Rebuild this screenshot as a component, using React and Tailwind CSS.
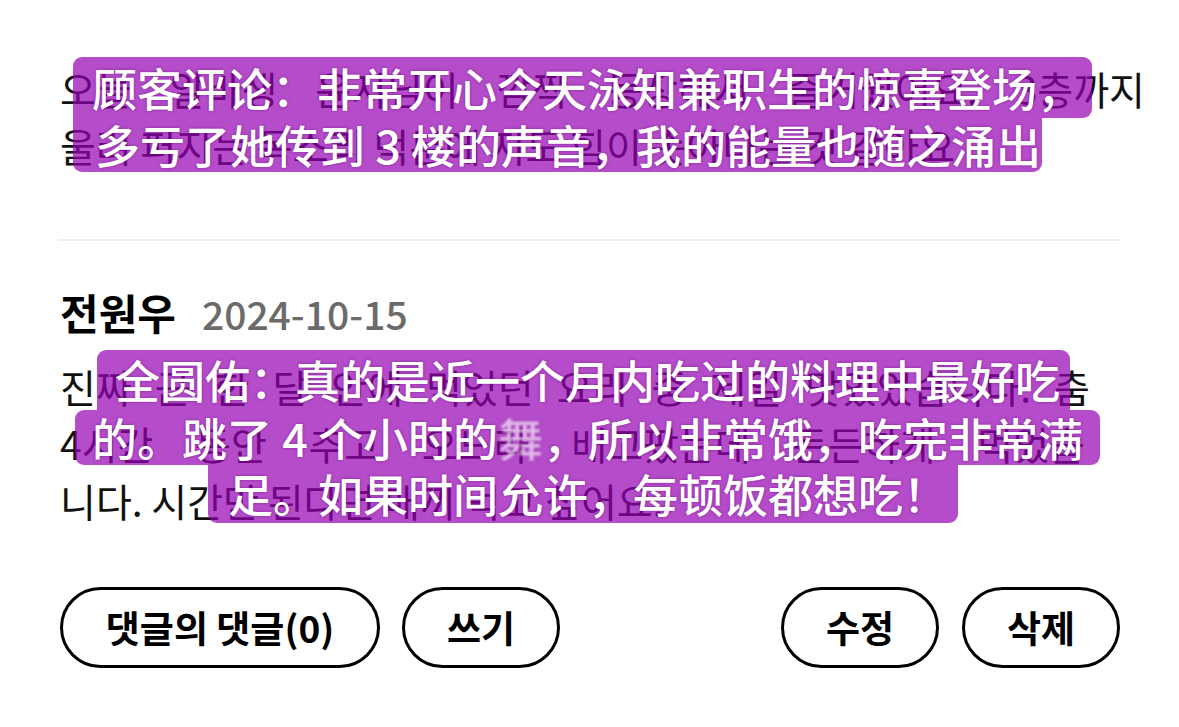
import React from 'react';

const box = 'bg-[rgba(150,0,180,0.7)] flex items-center whitespace-nowrap';
const zh = "font-['Noto_Sans_CJK_SC','Noto_Sans_CJK_KR',sans-serif] font-medium text-[45px] text-white [text-shadow:0_0_3px_rgba(90,0,110,0.55)]";
const fill = 'whitespace-nowrap text-justify [text-align-last:justify]';

function PillButton({ label, wide }) {
  return (
    <button
      className={`${wide ? 'w-[320px]' : 'w-[158px]'} h-[81px] rounded-full border-[3px] border-black flex items-center justify-center text-[37px] font-semibold text-black`}
    >
      {label}
    </button>
  );
}

export default function App() {
  return (
    <div className="relative w-[1179px] h-[727px] overflow-hidden bg-white pl-[60px] pr-[59px] pt-[60px] text-[#111] font-['Noto_Sans_CJK_KR',sans-serif]">
      {/* previous review text */}
      <div className="text-[39px] leading-[57px] whitespace-nowrap">
        <p className={`${fill} w-[1085px]`}>오늘 알바생 윤지님이 깜짝 등장해서 즐거웠어요. 3층까지</p>
        <p>울려 퍼지는 목소리 덕분에 저도 힘이 솟아나는 것 같아요</p>
      </div>

      <div className="mt-[65px] -ml-[2px] h-[2px] bg-[#efefef]" />

      {/* review header */}
      <div className="mt-[46px] flex items-baseline gap-[26px] leading-[50px]">
        <span className="text-[42px] font-semibold text-black">전원우</span>
        <span className="text-[39px] font-medium text-[#6b6b6b]">2024-10-15</span>
      </div>

      <div className="mt-[20px] text-[39px] leading-[57px] whitespace-nowrap">
        <p className={`${fill} w-[1030px]`}>진짜 근 한 달 안에 먹었던 요리 중 제일 맛있었습니다. 춤</p>
        <p className={`${fill} w-[1025px]`}>4시간 동안 추고 오느라 배고팠는데 든든하게 먹었습</p>
        <p>니다. 시간만 된다면 매끼 먹고 싶어요.</p>
      </div>

      {/* actions */}
      <div className="mt-[58px] flex justify-between">
        <div className="flex gap-[22px]">
          <PillButton label="댓글의 댓글(0)" wide />
          <PillButton label="쓰기" />
        </div>
        <div className="flex gap-[23px]">
          <PillButton label="수정" />
          <PillButton label="삭제" />
        </div>
      </div>

      {/* translation overlays */}
      <div className={`absolute left-[73px] top-[57px] flex flex-col items-start ${zh}`}>
        <div className={`${box} w-[1019px] h-[61px] pl-[19px] rounded-t-[9px] rounded-br-[9px]`}>
          顾客评论：非常开心今天泳知兼职生的惊喜登场，
        </div>
        <div className={`${box} w-[969px] h-[54px] pl-[22px] rounded-b-[9px]`}>
          多亏了她传到 3 楼的声音，我的能量也随之涌出
        </div>
      </div>

      <div className={`absolute left-[75px] top-[350px] flex flex-col items-start ${zh}`}>
        <div className={`${box} ml-[22px] w-[973px] h-[60px] pl-[18px] rounded-t-[9px]`}>
          全圆佑：真的是近一个月内吃过的料理中最好吃
        </div>
        <div className={`${box} w-[1025px] h-[55px] pl-[17px] rounded-[9px]`}>
          的。跳了 4 个小时的<span className="opacity-60 blur-[1px]">舞</span>，所以非常饿，吃完非常满
        </div>
        <div className={`${box} ml-[133px] w-[750px] h-[58px] pl-[20px] rounded-b-[9px]`}>
          足。如果时间允许，每顿饭都想吃！
        </div>
      </div>
    </div>
  );
}
